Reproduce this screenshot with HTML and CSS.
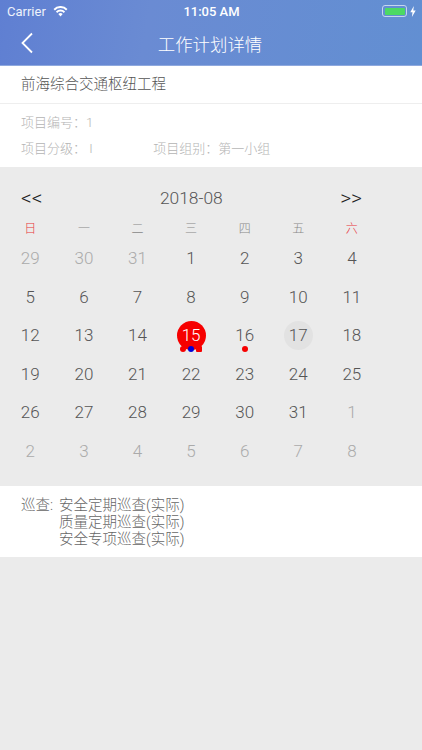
FILE: index.html
```html
<!DOCTYPE html>
<html lang="zh">
<head>
<meta charset="utf-8">
<title>工作计划详情</title>
<link rel="stylesheet" href="styles.css">
</head>
<body>
<header class="header">
  <div class="status">
    <div class="status-left">
      <span>Carrier</span>
      <svg class="wifi" viewBox="0 0 16 12" width="15" height="11"><path d="M8 11.5 5.6 8.8a3.4 3.4 0 0 1 4.8 0zM4.4 7.5 3 6a7 7 0 0 1 10 0l-1.4 1.5a5 5 0 0 0-7.2 0zM1.9 4.8.4 3.2a10.6 10.6 0 0 1 15.2 0l-1.5 1.6a8.5 8.5 0 0 0-12.2 0z" fill="#fff"/></svg>
    </div>
    <div class="status-time">11:05 AM</div>
    <div class="status-right">
      <span class="battery"><span class="battery-fill"></span></span>
      <svg class="bolt" viewBox="0 0 6 11" width="6" height="11"><path d="M3.8 0 .3 6.2h2.2L1.9 11l3.8-6.6H3.3z" fill="#fff"/></svg>
    </div>
  </div>
  <div class="nav">
    <svg class="back" viewBox="0 0 14 22" width="14" height="22"><path d="M12 1.5 2.5 11 12 20.5" fill="none" stroke="#fff" stroke-width="1.8"/></svg>
    <h1 class="nav-title">工作计划详情</h1>
  </div>
</header>

<section class="info">
  <div class="project">前海综合交通枢纽工程</div>
  <div class="meta">
    <div class="meta-row">项目编号：1</div>
    <div class="meta-row">
      <span class="meta-a">项目分级： I</span>
      <span>项目组别：第一小组</span>
    </div>
  </div>
</section>

<section class="calendar">
  <div class="cal-head">
    <span class="cal-arrow">&lt;&lt;</span>
    <span class="cal-title">2018-08</span>
    <span class="cal-arrow">&gt;&gt;</span>
  </div>
  <div class="weekdays">
    <span class="red">日</span><span>一</span><span>二</span><span>三</span><span>四</span><span>五</span><span class="red">六</span>
  </div>
  <div class="days">
    <span class="day muted">29</span><span class="day muted">30</span><span class="day muted">31</span><span class="day">1</span><span class="day">2</span><span class="day">3</span><span class="day">4</span>
    <span class="day">5</span><span class="day">6</span><span class="day">7</span><span class="day">8</span><span class="day">9</span><span class="day">10</span><span class="day">11</span>
    <span class="day">12</span><span class="day">13</span><span class="day">14</span>
    <span class="day selected">15<i class="dots"><b class="dot"></b><b class="dot blue"></b><b class="dot square"></b></i></span>
    <span class="day">16<i class="dots"><b class="dot"></b></i></span>
    <span class="day today">17</span><span class="day">18</span>
    <span class="day">19</span><span class="day">20</span><span class="day">21</span><span class="day">22</span><span class="day">23</span><span class="day">24</span><span class="day">25</span>
    <span class="day">26</span><span class="day">27</span><span class="day">28</span><span class="day">29</span><span class="day">30</span><span class="day">31</span><span class="day muted">1</span>
    <span class="day muted">2</span><span class="day muted">3</span><span class="day muted">4</span><span class="day muted">5</span><span class="day muted">6</span><span class="day muted">7</span><span class="day muted">8</span>
  </div>
</section>

<section class="plans">
  <span class="plans-label">巡查:</span>
  <div class="plans-list">
    <div>安全定期巡查(实际)</div>
    <div>质量定期巡查(实际)</div>
    <div>安全专项巡查(实际)</div>
  </div>
</section>
</body>
</html>
```
FILE: styles.css
```css
* { box-sizing: border-box; }
html, body { margin: 0; height: 100%; }
body {
  width: 422px;
  height: 750px;
  overflow: hidden;
  background: #ebebeb;
  font-family: "Roboto", "Noto Sans CJK SC", sans-serif;
  font-weight: 300;
  color: #555;
}
.header {
  height: 66px;
  border-bottom: 1px solid #8fa9de;
  background: linear-gradient(100deg, #5f7fd2 0%, #6a8bd3 35%, #628fd2 100%);
  color: #fff;
}
.status {
  height: 21px;
  padding: 1px 6px 0 7px;
  display: grid;
  grid-template-columns: 1fr auto 1fr;
  align-items: center;
  font-size: 13px;
}
.status-left { display: flex; align-items: center; gap: 7px; color: #eef2fb; font-weight: 400; }
.status-time { font-weight: 500; font-size: 13px; }
.status-right { display: flex; align-items: center; justify-content: flex-end; gap: 3px; }
.battery {
  width: 25px;
  height: 12px;
  padding: 1.5px;
  border: 1px solid #c6d6ef;
  border-radius: 3px;
  display: block;
}
.battery-fill { display: block; height: 100%; background: #4cd964; border-radius: 1px; }
.nav {
  position: relative;
  height: 44px;
  display: flex;
  align-items: center;
  justify-content: center;
}
.back { position: absolute; left: 20px; top: 11px; }
.nav-title { margin: 0 2px 0 0; font-size: 17.4px; font-weight: 300; color: #fff; }
.info { background: #fff; height: 101px; }
.project {
  height: 38px;
  padding-left: 21px;
  border-bottom: 1px solid #eee;
  font-size: 14.5px;
  line-height: 38px;
  color: #555;
}
.meta { padding: 6px 21px 0; font-size: 13px; color: #b4b4b4; }
.meta-row { height: 26px; line-height: 26px; }
.meta-a { display: inline-block; width: 129px; }
.calendar { height: 319px; padding: 20px 0 0 3.5px; }
.cal-head {
  height: 22px;
  padding: 0 60px 0 17.5px;
  display: flex;
  justify-content: space-between;
  align-items: center;
}
.cal-arrow { font-size: 21px; color: #222; }
.cal-title { font-size: 17.4px; color: #555; }
.weekdays {
  margin-top: 10px;
  display: grid;
  grid-template-columns: repeat(7, 53.6px);
  height: 20px;
  line-height: 20px;
  text-align: center;
  font-size: 12px;
  color: #888;
}
.red { color: #e8363c; }
.days {
  display: grid;
  grid-template-columns: repeat(7, 53.6px);
  grid-auto-rows: 38.5px;
}
.day {
  position: relative;
  font-size: 17px;
  line-height: 38px;
  text-align: center;
  color: #555;
  z-index: 0;
}
.muted { color: #aaa; }
.today::before, .selected::before {
  content: "";
  position: absolute;
  z-index: -1;
  left: 50%;
  top: 4.5px;
  width: 29px;
  height: 29px;
  margin-left: -14.5px;
  border-radius: 50%;
  background: #e2e2e2;
}
.selected { color: #fff; }
.selected::before { background: #f60000; }
.dots {
  position: absolute;
  left: 0;
  right: 0;
  top: 30px;
  display: flex;
  justify-content: center;
  gap: 2px;
}
.dot { width: 6px; height: 6px; border-radius: 50%; background: #f60000; }
.dot.blue { background: #0000d8; }
.dot.square { border-radius: 1px; }
.plans {
  height: 71px;
  padding: 11px 0 0 21px;
  background: #fff;
  display: flex;
  font-size: 14.5px;
  line-height: 17px;
  color: #666;
}
.plans-label { width: 38px; }
```
